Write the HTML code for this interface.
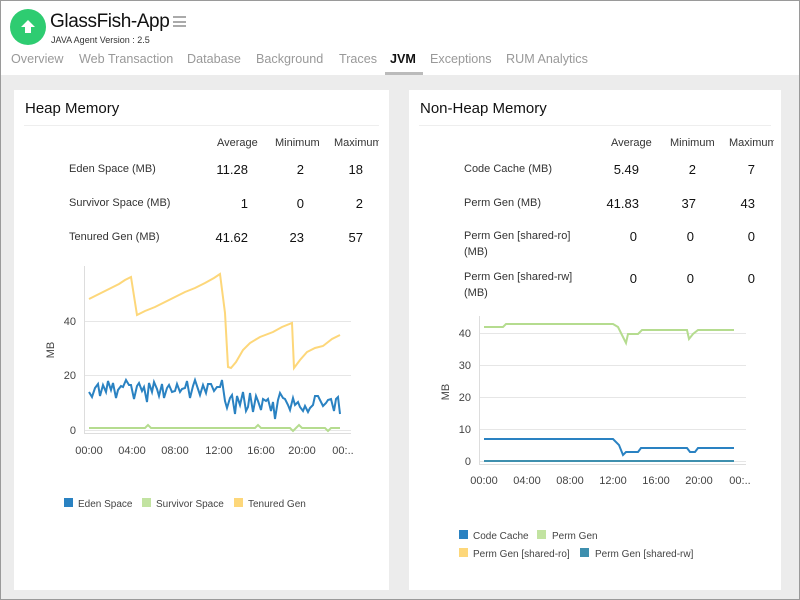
<!DOCTYPE html>
<html><head><meta charset="utf-8"><style>
*{margin:0;padding:0;box-sizing:border-box}
body{width:800px;height:600px;overflow:hidden;font-family:"Liberation Sans",sans-serif;background:#ececec;position:relative;color:#222}
.frame{position:absolute;inset:0;border:1px solid #9a9a9a;pointer-events:none;z-index:5}
.hdr{position:absolute;left:0;top:0;width:800px;height:75px;background:#fff}
.logo{position:absolute;left:10px;top:9px;width:36px;height:36px;border-radius:50%;background:#2ecc71}
.title{position:absolute;left:50px;top:11px;font-size:19px;color:#111;letter-spacing:-0.4px}
.ham{position:absolute;left:173px;top:16px;width:13px}
.ham i{display:block;height:2px;background:#aaa;margin-bottom:2.5px}
.ver{position:absolute;left:51px;top:35px;font-size:9px;color:#333}
.tabs{position:absolute;left:10px;top:52px;font-size:12.6px;color:#999;white-space:nowrap}
.tabs span{position:absolute;top:0}
.tabs .act{color:#111;font-weight:bold}
.ul{position:absolute;left:385px;top:72px;width:38px;height:3px;background:#bbb}
.card{position:absolute;top:90px;background:#fff;height:500px}
.card h2{position:absolute;left:11px;top:10px;font-size:15px;font-weight:normal;color:#111}
.card .hr{position:absolute;left:10px;right:10px;top:35px;height:1px;background:#eee}
.t{position:absolute;font-size:11px;color:#333;white-space:nowrap}
.n{position:absolute;font-size:13px;color:#111;text-align:right;width:40px}
svg text{font-family:"Liberation Sans",sans-serif;font-size:11px;fill:#444}
svg text.l{font-size:10px}
</style></head><body>
<div class="hdr">
<div class="logo"><svg width="36" height="36"><path d="M18 11 L25 18 L21 18 L21 24 L15 24 L15 18 L11 18Z" fill="#fff"/></svg></div>
<div class="title">GlassFish-App</div>
<div class="ham"><i></i><i></i><i></i></div>
<div class="ver">JAVA Agent Version : 2.5</div>
<div class="tabs">
<span style="left:1px">Overview</span><span style="left:69px">Web Transaction</span><span style="left:177px">Database</span><span style="left:246px">Background</span><span style="left:329px">Traces</span><span class="act" style="left:380px">JVM</span><span style="left:420px">Exceptions</span><span style="left:496px">RUM Analytics</span>
</div>
<div class="ul"></div>
</div>

<div class="card" style="left:14px;width:375px">
<h2>Heap Memory</h2><div class="hr"></div>
<div class="t" style="left:203px;top:47px">Average</div>
<div class="t" style="left:261px;top:47px">Minimum</div>
<div class="t" style="left:320px;top:47px;width:45px;overflow:hidden">Maximum</div>
<div class="t" style="left:55px;top:73px">Eden Space (MB)</div>
<div class="t" style="left:55px;top:107px">Survivor Space (MB)</div>
<div class="t" style="left:55px;top:141px">Tenured Gen (MB)</div>
<div class="n" style="left:194px;top:72px">11.28</div><div class="n" style="left:250px;top:72px">2</div><div class="n" style="left:309px;top:72px">18</div>
<div class="n" style="left:194px;top:106px">1</div><div class="n" style="left:250px;top:106px">0</div><div class="n" style="left:309px;top:106px">2</div>
<div class="n" style="left:194px;top:140px">41.62</div><div class="n" style="left:250px;top:140px">23</div><div class="n" style="left:309px;top:140px">57</div>
</div>

<div class="card" style="left:409px;width:372px">
<h2>Non-Heap Memory</h2><div class="hr"></div>
<div class="t" style="left:202px;top:47px">Average</div>
<div class="t" style="left:261px;top:47px">Minimum</div>
<div class="t" style="left:320px;top:47px;width:45px;overflow:hidden">Maximum</div>
<div class="t" style="left:55px;top:73px">Code Cache (MB)</div>
<div class="t" style="left:55px;top:107px">Perm Gen (MB)</div>
<div class="t" style="left:55px;top:138px;line-height:16px">Perm Gen [shared-ro]<br>(MB)</div>
<div class="t" style="left:55px;top:179px;line-height:16px">Perm Gen [shared-rw]<br>(MB)</div>
<div class="n" style="left:190px;top:72px">5.49</div><div class="n" style="left:247px;top:72px">2</div><div class="n" style="left:306px;top:72px">7</div>
<div class="n" style="left:190px;top:106px">41.83</div><div class="n" style="left:247px;top:106px">37</div><div class="n" style="left:306px;top:106px">43</div>
<div class="n" style="left:188px;top:139px">0</div><div class="n" style="left:245px;top:139px">0</div><div class="n" style="left:306px;top:139px">0</div>
<div class="n" style="left:188px;top:181px">0</div><div class="n" style="left:245px;top:181px">0</div><div class="n" style="left:306px;top:181px">0</div>
</div>

<svg style="position:absolute;left:0;top:0" width="800" height="600">
<g stroke="#e6e6e6" stroke-width="1"><line x1="84" y1="321.5" x2="351" y2="321.5"/><line x1="84" y1="375.5" x2="351" y2="375.5"/><line x1="84" y1="430.5" x2="351" y2="430.5"/></g>
<line x1="84.5" y1="266" x2="84.5" y2="434" stroke="#ddd"/><line x1="84" y1="433.5" x2="351" y2="433.5" stroke="#ddd"/>
<text x="76" y="325" text-anchor="end">40</text><text x="76" y="379" text-anchor="end">20</text><text x="76" y="434" text-anchor="end">0</text>
<text transform="translate(54,350) rotate(-90)" text-anchor="middle">MB</text>
<g text-anchor="middle"><text x="89" y="454">00:00</text><text x="132" y="454">04:00</text><text x="175" y="454">08:00</text><text x="219" y="454">12:00</text><text x="261" y="454">16:00</text><text x="302" y="454">20:00</text><text x="343" y="454">00:..</text></g>
<polyline fill="none" stroke="#fdd77a" stroke-width="2" points="89,299 95,296 101,293 107,290 113,287 119,284 125,280 131,277 137,315 145,311 155,307 165,302 175,297 185,292 195,288 205,283 214,278 220,274 225,313 228,367 231,368 236,362 243,350 250,343 260,337 273,332 282,327 292,323 294,368 300,360 307,352 315,348 323,346 332,339 340,335"/>
<polyline fill="none" stroke="#2a82c2" stroke-width="2" points="89,392 92,397 95,388 98,384 100,396 103,385 106,392 108,381 111,390 113,383 116,398 118,390 121,386 123,387 126,380 129,385 131,385 134,399 137,386 139,383 142,391 144,387 147,402 149,383 152,392 154,382 157,389 159,396 162,384 164,398 167,388 169,385 172,392 175,391 177,384 180,392 182,389 185,388 187,381 190,398 193,386 195,380 198,389 200,395 203,385 206,393 208,384 211,384 214,391 217,387 220,387 222,380 225,401 227,408 230,398 232,395 235,414 237,396 240,405 243,392 246,411 248,407 250,393 253,412 256,396 258,401 261,410 263,399 266,401 268,399 271,411 273,402 275,419 278,400 280,393 283,398 285,399 288,405 290,410 293,398 295,405 298,402 300,407 303,411 305,406 308,412 310,408 313,405 315,396 318,396 321,402 323,406 326,403 328,400 331,399 334,411 336,399 338,397 340,414"/>
<polyline fill="none" stroke="#b5dc8f" stroke-width="2" points="89,428 145,428 148,425 151,428 255,428 258,425 261,428 290,428 293,431 296,428 299,425 302,428 325,428 328,431 331,428 340,428"/>
<rect x="64" y="498" width="9" height="9" fill="#2a82c2"/><text class="l" x="78" y="507">Eden Space</text>
<rect x="142" y="498" width="9" height="9" fill="#c2e3a1"/><text class="l" x="156" y="507">Survivor Space</text>
<rect x="234" y="498" width="9" height="9" fill="#fdd77a"/><text class="l" x="248" y="507">Tenured Gen</text>

<g stroke="#e6e6e6" stroke-width="1"><line x1="479" y1="333.5" x2="746" y2="333.5"/><line x1="479" y1="365.5" x2="746" y2="365.5"/><line x1="479" y1="397.5" x2="746" y2="397.5"/><line x1="479" y1="429.5" x2="746" y2="429.5"/><line x1="479" y1="461.5" x2="746" y2="461.5"/></g>
<line x1="479.5" y1="316" x2="479.5" y2="465" stroke="#ddd"/><line x1="479" y1="464.5" x2="746" y2="464.5" stroke="#ddd"/>
<g text-anchor="end"><text x="471" y="337">40</text><text x="471" y="369">30</text><text x="471" y="401">20</text><text x="471" y="433">10</text><text x="471" y="465">0</text></g>
<text transform="translate(449,392) rotate(-90)" text-anchor="middle">MB</text>
<g text-anchor="middle"><text x="484" y="484">00:00</text><text x="527" y="484">04:00</text><text x="570" y="484">08:00</text><text x="613" y="484">12:00</text><text x="656" y="484">16:00</text><text x="699" y="484">20:00</text><text x="740" y="484">00:..</text></g>
<polyline fill="none" stroke="#b5dc8f" stroke-width="2" points="484,327 503,327 506,324 613,324 618,327 626,343 628,334 638,334 642,330 687,330 689,339 693,334 698,330 734,330"/>
<polyline fill="none" stroke="#2a82c2" stroke-width="2" points="484,439 613,439 619,445 623,455 626,452 638,452 641,448 687,448 690,452 695,452 698,448 734,448"/>
<line x1="484" y1="461" x2="734" y2="461" stroke="#3e8fae" stroke-width="2"/>
<rect x="459" y="530" width="9" height="9" fill="#2a82c2"/><text class="l" x="473" y="539">Code Cache</text>
<rect x="537" y="530" width="9" height="9" fill="#c2e3a1"/><text class="l" x="552" y="539">Perm Gen</text>
<rect x="459" y="548" width="9" height="9" fill="#fdd77a"/><text class="l" x="473" y="557">Perm Gen [shared-ro]</text>
<rect x="580" y="548" width="9" height="9" fill="#3e8fae"/><text class="l" x="595" y="557">Perm Gen [shared-rw]</text>
</svg>
<div class="frame"></div>
</body></html>
